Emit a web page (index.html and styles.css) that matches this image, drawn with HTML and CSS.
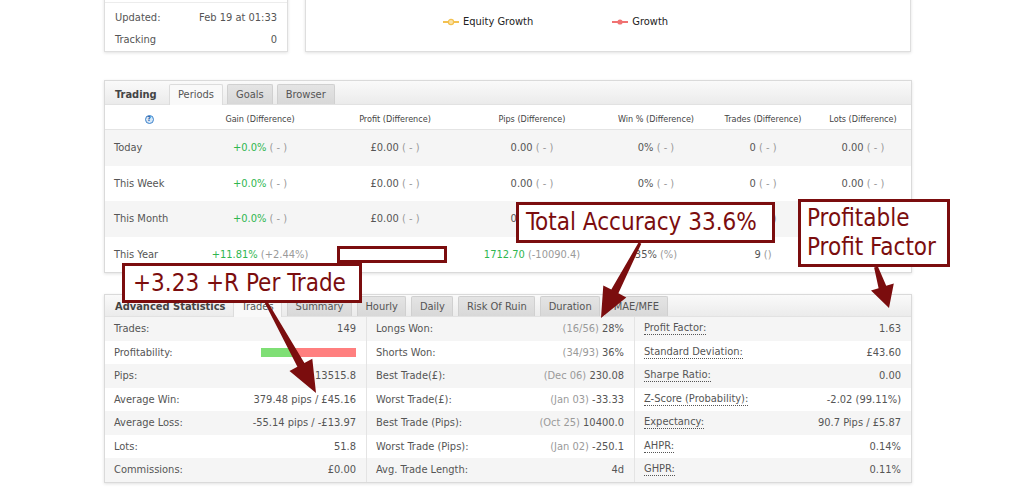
FILE: index.html
```html
<!DOCTYPE html>
<html>
<head>
<meta charset="utf-8">
<link rel="stylesheet" href="styles.css">
</head>
<body>
<div class="page">
  <div class="top-row">
    <div class="card info">
      <div class="info-row prev"></div>
      <div class="info-row first"><span>Updated:</span><span>Feb 19 at 01:33</span></div>
      <div class="info-row"><span>Tracking</span><span>0</span></div>
    </div>
    <div class="card chart">
      <div class="legend">
        <span class="legend-item"><svg width="16" height="8" viewBox="0 0 16 8"><line x1="0" y1="4" x2="16" y2="4" stroke="#f3c150" stroke-width="2"/><circle cx="8" cy="4" r="2.6" fill="#fbe3a8" stroke="#f3c150" stroke-width="1.2"/></svg>Equity Growth</span>
        <span class="legend-item"><svg width="16" height="8" viewBox="0 0 16 8"><line x1="0" y1="4" x2="16" y2="4" stroke="#f07272" stroke-width="2"/><circle cx="8" cy="4" r="2.6" fill="#f07272"/></svg>Growth</span>
      </div>
    </div>
  </div>

  <section class="panel trading">
    <div class="panel-head">
      <span class="panel-title">Trading</span>
      <div class="tabs">
        <span class="tab active">Periods</span>
        <span class="tab">Goals</span>
        <span class="tab">Browser</span>
      </div>
    </div>
    <div class="ptable">
      <div class="prow phead">
        <span class="cell"><span class="help">?</span></span>
        <span class="cell">Gain (Difference)</span>
        <span class="cell">Profit (Difference)</span>
        <span class="cell">Pips (Difference)</span>
        <span class="cell">Win % (Difference)</span>
        <span class="cell">Trades (Difference)</span>
        <span class="cell">Lots (Difference)</span>
      </div>
      <div class="prow odd">
        <span class="cell label">Today</span>
        <span class="cell"><span class="pos">+0.0%</span> <span class="muted">( - )</span></span>
        <span class="cell">£0.00 <span class="muted">( - )</span></span>
        <span class="cell">0.00 <span class="muted">( - )</span></span>
        <span class="cell">0% <span class="muted">( - )</span></span>
        <span class="cell">0 <span class="muted">( - )</span></span>
        <span class="cell">0.00 <span class="muted">( - )</span></span>
      </div>
      <div class="prow">
        <span class="cell label">This Week</span>
        <span class="cell"><span class="pos">+0.0%</span> <span class="muted">( - )</span></span>
        <span class="cell">£0.00 <span class="muted">( - )</span></span>
        <span class="cell">0.00 <span class="muted">( - )</span></span>
        <span class="cell">0% <span class="muted">( - )</span></span>
        <span class="cell">0 <span class="muted">( - )</span></span>
        <span class="cell">0.00 <span class="muted">( - )</span></span>
      </div>
      <div class="prow odd">
        <span class="cell label">This Month</span>
        <span class="cell"><span class="pos">+0.0%</span> <span class="muted">( - )</span></span>
        <span class="cell">£0.00 <span class="muted">( - )</span></span>
        <span class="cell">0.00 <span class="muted">( - )</span></span>
        <span class="cell">0% <span class="muted">( - )</span></span>
        <span class="cell">0 <span class="muted">( - )</span></span>
        <span class="cell">0.00 <span class="muted">( - )</span></span>
      </div>
      <div class="prow">
        <span class="cell label">This Year</span>
        <span class="cell"><span class="pos">+11.81%</span> <span class="muted">(+2.44%)</span></span>
        <span class="cell"></span>
        <span class="cell"><span class="pos">1712.70</span> <span class="muted">(-10090.4)</span></span>
        <span class="cell">35% <span class="muted">(%)</span></span>
        <span class="cell">9 <span class="muted">()</span></span>
        <span class="cell"></span>
      </div>
    </div>
  </section>

  <section class="panel adv">
    <div class="panel-head short">
      <span class="panel-title">Advanced Statistics</span>
      <div class="tabs">
        <span class="tab active">Trades</span>
        <span class="tab">Summary</span>
        <span class="tab">Hourly</span>
        <span class="tab">Daily</span>
        <span class="tab">Risk Of Ruin</span>
        <span class="tab">Duration</span>
        <span class="tab">MAE/MFE</span>
      </div>
    </div>
    <div class="stats">
      <div class="scol">
        <div class="srow"><span>Trades:</span><span>149</span></div>
        <div class="srow"><span>Profitability:</span><span class="bar"><span class="bar-win"></span></span></div>
        <div class="srow"><span>Pips:</span><span>13515.8</span></div>
        <div class="srow"><span>Average Win:</span><span>379.48 pips / £45.16</span></div>
        <div class="srow"><span>Average Loss:</span><span>-55.14 pips / -£13.97</span></div>
        <div class="srow"><span>Lots:</span><span>51.8</span></div>
        <div class="srow"><span>Commissions:</span><span>£0.00</span></div>
      </div>
      <div class="scol">
        <div class="srow"><span>Longs Won:</span><span><span class="muted">(16/56)</span> 28%</span></div>
        <div class="srow"><span>Shorts Won:</span><span><span class="muted">(34/93)</span> 36%</span></div>
        <div class="srow"><span>Best Trade(£):</span><span><span class="muted">(Dec 06)</span> 230.08</span></div>
        <div class="srow"><span>Worst Trade(£):</span><span><span class="muted">(Jan 03)</span> -33.33</span></div>
        <div class="srow"><span>Best Trade (Pips):</span><span><span class="muted">(Oct 25)</span> 10400.0</span></div>
        <div class="srow"><span>Worst Trade (Pips):</span><span><span class="muted">(Jan 02)</span> -250.1</span></div>
        <div class="srow"><span>Avg. Trade Length:</span><span>4d</span></div>
      </div>
      <div class="scol">
        <div class="srow"><span class="dotted">Profit Factor:</span><span>1.63</span></div>
        <div class="srow"><span class="dotted">Standard Deviation:</span><span>£43.60</span></div>
        <div class="srow"><span class="dotted">Sharpe Ratio:</span><span>0.00</span></div>
        <div class="srow"><span class="dotted">Z-Score (Probability):</span><span>-2.02 (99.11%)</span></div>
        <div class="srow"><span class="dotted">Expectancy:</span><span>90.7 Pips / £5.87</span></div>
        <div class="srow"><span class="dotted">AHPR:</span><span>0.14%</span></div>
        <div class="srow"><span class="dotted">GHPR:</span><span>0.11%</span></div>
      </div>
    </div>
  </section>

  <div class="note note-blank"></div>
  <div class="note note-acc">Total Accuracy 33.6%</div>
  <div class="note note-pf">Profitable<br>Profit Factor</div>
  <div class="note note-r">+3.23 +R Per Trade</div>

  <svg class="arrows" width="1024" height="493" viewBox="0 0 1024 493">
    <polygon fill="#7b0d0e" points="264.7,302.7 297.4,366.7 289.5,370.9 316,393 312.3,358.7 304.4,363.0 267.3,301.3"/>
    <polygon fill="#7b0d0e" points="638.7,242.3 611.3,289.6 603.3,285.4 601,318 626.3,297.4 618.4,293.2 641.3,243.7"/>
    <polygon fill="#7b0d0e" points="874.1,267.6 878.6,288.2 871.0,290.6 889,308 893.8,283.4 886.2,285.8 877.9,266.4"/>
  </svg>
</div>
</body>
</html>
```

FILE: styles.css
```css
* { box-sizing: border-box; }

html, body {
  margin: 0;
  padding: 0;
  background: #ffffff;
}

body {
  font-family: "DejaVu Sans Condensed", "Liberation Sans", sans-serif;
  font-size: 11px;
  color: #555;
  overflow: hidden;
}

.page {
  position: relative;
  display: flow-root;
  width: 1024px;
  height: 493px;
  padding-left: 104px;
  overflow: hidden;
}

/* ---------- top cards ---------- */
.top-row {
  display: flex;
  gap: 17px;
  margin-top: -20px;
}

.card {
  background: #fff;
  border: 1px solid #dedede;
  box-shadow: 0 1px 3px rgba(0, 0, 0, 0.12);
  height: 72px;
}

.info {
  width: 184px;
  padding: 0 10px 1px 10px;
}

.info-row {
  display: flex;
  justify-content: space-between;
  align-items: center;
  height: 22px;
}

.info-row.prev {
  height: 22px;
  border-bottom: 1px solid #ececec;
  margin: 0 -10px;
}

.info-row.first {
  margin-top: 3px;
}

.chart {
  width: 606px;
  padding-left: 137px;
  padding-top: 35px;
}

.legend {
  display: flex;
  color: #222;
  font-size: 11px;
  line-height: 12px;
}

.legend-item {
  display: flex;
  align-items: center;
  gap: 4px;
}

.legend-item + .legend-item {
  margin-left: 79px;
}

/* ---------- panels ---------- */
.panel {
  width: 808px;
  background: #fff;
  border: 1px solid #dadada;
  box-shadow: 0 1px 3px rgba(0, 0, 0, 0.12);
}

.trading {
  margin-top: 28px;
}

.adv {
  margin-top: 21px;
}

.panel-head {
  display: flex;
  align-items: flex-end;
  height: 24px;
  background: linear-gradient(#fafafa, #ebebeb);
  padding-left: 10px;
  border-bottom: 1px solid #e2e2e2;
}

.panel-head.short {
  height: 22px;
}

.panel-title {
  align-self: center;
  font-weight: bold;
  color: #444;
  width: 54px;
  padding-top: 4px;
}

.adv .panel-title {
  width: 118px;
  padding-top: 1px;
}

.tabs {
  display: flex;
  gap: 4px;
}

.tab {
  display: block;
  height: 20px;
  line-height: 20px;
  padding: 0 8px;
  background: linear-gradient(#e4e4e4, #d8d8d8);
  border: 1px solid #d0d0d0;
  border-bottom: none;
  border-radius: 2px 2px 0 0;
  color: #555;
  margin-bottom: -1px;
}

.adv .tabs {
  gap: 5px;
}

.adv .tab {
  height: 20px;
  line-height: 19px;
  padding: 0 7.5px;
}

.tab.active {
  background: #f9f9f9;
  border-color: #dcdcdc;
  height: 21px;
}

.adv .tab.active {
  height: 21px;
}

/* ---------- periods table ---------- */
.prow {
  display: grid;
  grid-template-columns: 88px 134px 136px 138px 110px 104px 1fr;
  align-items: center;
  height: 35.5px;
}

.prow.phead {
  height: 25px;
  padding-top: 4px;
  font-size: 9px;
  color: #444;
  border-bottom: 1px solid #e4e4e4;
}

.prow.odd {
  background: #f5f5f5;
}

.cell {
  text-align: center;
  white-space: nowrap;
}

.cell.label {
  text-align: left;
  padding-left: 9px;
}

.help {
  display: inline-block;
  width: 9px;
  height: 9px;
  border-radius: 50%;
  background: #d6e7f8;
  border: 1px solid #3d83cc;
  color: #1d5fa6;
  font-size: 7px;
  font-weight: bold;
  line-height: 7px;
  text-align: center;
  vertical-align: middle;
}

.pos {
  color: #2fb64f;
}

.muted {
  color: #9a9a9a;
}

/* ---------- advanced stats ---------- */
.stats {
  display: grid;
  grid-template-columns: 261px 268px 1fr;
}

.scol + .scol {
  border-left: 1px solid #e4e4e4;
}

.srow {
  display: flex;
  justify-content: space-between;
  align-items: center;
  height: 23.5px;
  padding: 0 10px 0 9px;
  white-space: nowrap;
}

.srow:nth-child(odd) {
  background: #f5f5f5;
}

.dotted {
  border-bottom: 1px dotted #555;
  line-height: 12px;
}

.bar {
  display: block;
  width: 95px;
  height: 9px;
  background: #ff7f7f;
}

.bar-win {
  display: block;
  width: 37%;
  height: 100%;
  background: #7fdf75;
}

/* ---------- annotations ---------- */
.note {
  position: absolute;
  background: #fff;
  border: 3px solid #7b0d0e;
  color: #7b0d0e;
  font-family: "DejaVu Sans Condensed", "Liberation Sans", sans-serif;
  font-size: 24px;
  white-space: nowrap;
}

.note-blank {
  left: 337px;
  top: 246px;
  width: 110px;
  height: 17px;
}

.note-acc {
  left: 516px;
  top: 202px;
  width: 259px;
  height: 41px;
  line-height: 35px;
  padding-left: 7px;
}

.note-pf {
  left: 798px;
  top: 199px;
  width: 152px;
  height: 68px;
  line-height: 29px;
  padding-left: 6px;
  padding-top: 2px;
}

.note-r {
  left: 122px;
  top: 263px;
  width: 240px;
  height: 40px;
  line-height: 34px;
  padding-left: 8px;
}

.arrows {
  position: absolute;
  left: 0;
  top: 0;
  pointer-events: none;
}
```
